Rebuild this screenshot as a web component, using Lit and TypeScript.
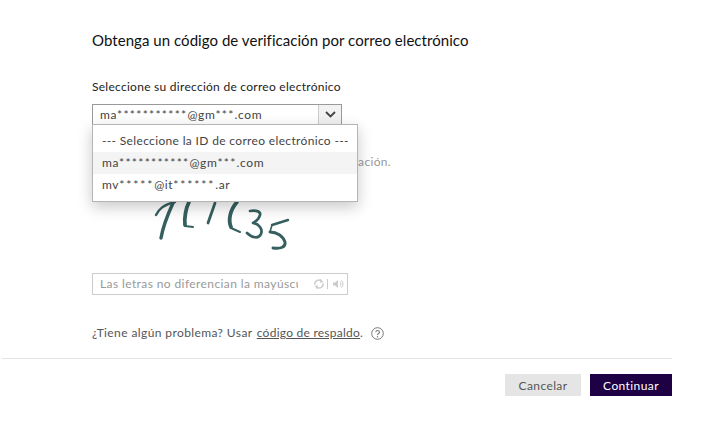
import { LitElement, html, css } from "lit";
import { customElement } from "lit/decorators.js";

@customElement("app-root")
export class AppRoot extends LitElement {
  static styles = css`
    :host { display: block; width: 722px; height: 429px; background: #fff; font-family: Lato, "Liberation Sans", sans-serif; color: #333; font-size: 12px; overflow: hidden; position: relative; }
    .wrap { padding: 30px 50px 0 2px; display: flex; flex-direction: column; width: 670px; }
    .body { padding-left: 90px; display: flex; flex-direction: column; }
    h1 { margin: 0; font-size: 15px; line-height: 20px; font-weight: 400; color: #111; letter-spacing: 0.05px; }
    .label { margin-top: 27px; line-height: 20px; color: #222; letter-spacing: 0.27px; }
    .selwrap { position: relative; margin-top: 7px; width: 250px; height: 21px; }
    .sel { box-sizing: border-box; width: 250px; height: 21px; border: 1px solid #999; display: flex; align-items: center; background: #fff; }
    .sel .val { flex: 1; padding-left: 7px; letter-spacing: 0.6px; color: #444; white-space: nowrap; }
    .st { letter-spacing: 1.3px; }
    .st2 { letter-spacing: 1.9px; }
    .sel .arrow { width: 22px; height: 19px; border-left: 1px solid #ccc; background: #f2f2f2; display: flex; align-items: center; justify-content: center; }
    .menu { position: absolute; left: 0; top: 20px; box-sizing: border-box; width: 266px; height: 78px; background: #fff; border: 1px solid #b5b5b5; box-shadow: 0 5px 14px rgba(0,0,0,.22); padding-top: 5px; z-index: 2; }
    .opt { height: 22px; line-height: 22px; padding-left: 9px; letter-spacing: 0.6px; color: #444; white-space: nowrap; }
    .opt.title { letter-spacing: 0.34px; }
    .opt.on { background: #f4f4f4; }
    .hint { margin-top: 28px; line-height: 18px; color: #999; letter-spacing: 0.33px; white-space: nowrap; }
    .captcha { display: block; margin-top: 14px; margin-left: 48px; }
    .input { box-sizing: border-box; margin-top: 18px; width: 256px; height: 22px; border: 1px solid #ccc; display: flex; align-items: center; padding-left: 7px; }
    .input .ph { width: 198px; overflow: hidden; white-space: nowrap; color: #999; letter-spacing: 0.4px; line-height: 18px; }
    .tools { margin-left: 15px; display: flex; align-items: center; }
    .sep { width: 1px; height: 10px; background: #ccc; margin: 0 4px 0 2px; }
    .help { margin-top: 28px; line-height: 20px; color: #555; letter-spacing: 0.4px; display: flex; align-items: center; white-space: pre; }
    .help a { color: #555; text-decoration: underline; margin-left: 1px; letter-spacing: 0.25px; }
    .q { margin-left: 8px; display: block; }
    hr { margin: 15px 0 0; border: 0; height: 1px; background: #e5e5e5; width: 670px; }
    .btns { margin-top: 15px; display: flex; justify-content: flex-end; gap: 9px; }
    button { border: 0; height: 22px; padding: 0; font: inherit; letter-spacing: 0.4px; }
    .cancel { width: 76px; background: #e5e5e5; color: #555; }
    .ok { width: 82px; background: #1e0044; color: #fff; }
  `;

  render() {
    return html`
      <div class="wrap">
        <div class="body">
          <h1>Obtenga un código de verificación por correo electrónico</h1>
          <div class="label">Seleccione su dirección de correo electrónico</div>
          <div class="selwrap">
            <div class="sel">
              <span class="val">ma<span class="st">***********</span>@gm<span class="st">***</span>.com</span>
              <span class="arrow"><svg width="11" height="7" viewBox="0 0 11 7"><path d="M1 1l4.5 4.5L10 1" fill="none" stroke="#444" stroke-width="1.8"/></svg></span>
            </div>
            <div class="menu">
              <div class="opt title">--- Seleccione la ID de correo electrónico ---</div>
              <div class="opt on">ma<span class="st">***********</span>@gm<span class="st">***</span>.com</div>
              <div class="opt">mv<span class="st2">*****</span>@it<span class="st2">******</span>.ar</div>
            </div>
          </div>
          <div class="hint">Ingrese los caracteres que aparecen en la verificación.</div>
          <svg class="captcha" width="160" height="70" viewBox="140 185 160 70" fill="none" stroke="#35605f" stroke-linecap="round" stroke-linejoin="round">
            <path d="M156 215C159 209 163 205 175 202" stroke-width="2.4"/>
            <path d="M173 203C168 214 163 226 161 238" stroke-width="3.4"/>
            <path d="M189 202C186 208 184 218 185 225" stroke-width="3.8"/>
            <path d="M185 226L193 227" stroke-width="2"/>
            <path d="M215 203L208 223" stroke-width="2.8"/>
            <path d="M237 202C230 210 228 220 231 227" stroke-width="3.8"/>
            <path d="M231 228L240 232" stroke-width="2"/>
            <path d="M250 211C255 210 261 211 260 215C259 219 255 222 253 223C259 224 263 229 261 234C259 239 252 238 247 233" stroke-width="2.7"/>
            <path d="M288 220L272 225" stroke-width="2.4"/>
            <path d="M272 225L270 232" stroke-width="1.6"/>
            <path d="M270 232C277 232 283 236 285 242C286 247 281 249 273 248" stroke-width="2.9"/>
          </svg>
          <div class="input">
            <span class="ph">Las letras no diferencian la mayúsculas</span>
            <span class="tools">
              <svg width="12" height="12" viewBox="0 0 12 12" fill="none" stroke="#ccc" stroke-width="1.4"><path d="M2 7a4 4 0 0 1 6.5-4M10 5a4 4 0 0 1-6.5 4"/><path d="M7.5 1.5l1.5 2-2 .6M4.5 10.5l-1.5-2 2-.6"/></svg>
              <span class="sep"></span>
              <svg width="12" height="12" viewBox="0 0 12 12" fill="#ccc"><path d="M1 4.5h2L6 2v8L3 7.5H1z"/><path d="M8 3.5c1.2 1.4 1.2 3.6 0 5M9.6 2.4c1.8 2 1.8 5.2 0 7.2" fill="none" stroke="#ccc"/></svg>
            </span>
          </div>
          <div class="help"><span>¿Tiene algún problema? Usar </span><a href="#">código de respaldo</a><span>.</span><svg class="q" width="13" height="13" viewBox="0 0 13 13" fill="none"><circle cx="6.5" cy="6.5" r="5.8" stroke="#777"/><path d="M4.8 5.2c0-2.2 3.6-2.2 3.6 0 0 1.3-1.9 1.3-1.9 2.8" stroke="#777" stroke-width="1.1"/><circle cx="6.5" cy="9.8" r=".7" fill="#777"/></svg></div>
        </div>
        <hr />
        <div class="btns">
          <button class="cancel">Cancelar</button>
          <button class="ok">Continuar</button>
        </div>
      </div>
    `;
  }
}
